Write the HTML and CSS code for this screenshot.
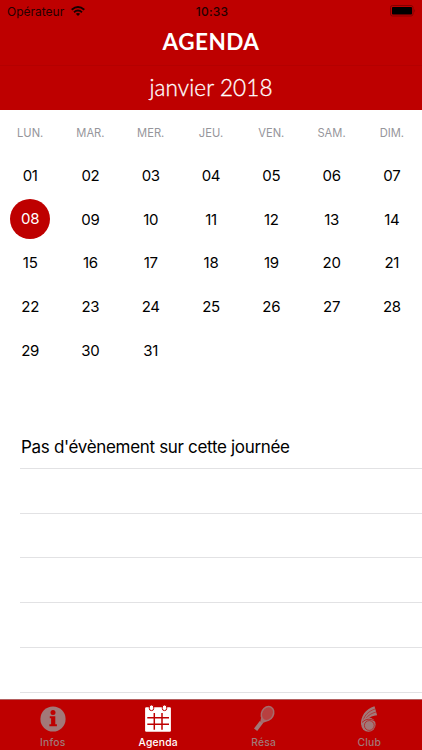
FILE: index.html
```
<!DOCTYPE html>
<html lang="fr">
<head>
    <meta charset="UTF-8">
    <meta name="viewport" content="width=device-width, initial-scale=1.0">
    <title>Agenda</title>
    <link rel="stylesheet" href="styles.css">
</head>
<body>

    <div class="app">
        <header>
            <div class="status-bar">
                <div class="carrier">
                    <span class="operator">Opérateur</span>
                    <svg class="wifi" width="14" height="10" viewBox="0 0 14 10" fill="none" stroke="#180000" stroke-width="1.9">
                        <path d="M0.7 3.7 Q7 -1.7 13.3 3.7"/>
                        <path d="M3 6.2 Q7 2.7 11 6.2"/>
                        <path d="M4.8 7.8 Q7 6.2 9.2 7.8 L7 10 Z" fill="#180000" stroke="none"/>
                    </svg>
                </div>
                <span class="time">10:33</span>
                <svg class="battery" width="27" height="12" viewBox="0 0 27 12">
                    <rect x="0.5" y="0.5" width="22.5" height="10.5" rx="2" fill="none" stroke="#830000"/>
                    <rect x="2" y="2" width="20" height="7.5" rx="0.8" fill="#000"/>
                    <path d="M24.3 3.8 Q26 5.7 24.3 7.7 Z" fill="#830000"/>
                </svg>
            </div>
            <h1>AGENDA</h1>
            <h2>janvier 2018</h2>
        </header>

        <div class="weekdays">
            <span>LUN.</span><span>MAR.</span><span>MER.</span><span>JEU.</span><span>VEN.</span><span>SAM.</span><span>DIM.</span>
        </div>
        <div class="days">
            <span>01</span><span>02</span><span>03</span><span>04</span><span>05</span><span>06</span><span>07</span>
            <span class="selected">08</span><span>09</span><span>10</span><span>11</span><span>12</span><span>13</span><span>14</span>
            <span>15</span><span>16</span><span>17</span><span>18</span><span>19</span><span>20</span><span>21</span>
            <span>22</span><span>23</span><span>24</span><span>25</span><span>26</span><span>27</span><span>28</span>
            <span>29</span><span>30</span><span>31</span>
        </div>

        <ul class="events">
            <li><span class="event-text">Pas d'évènement sur cette journée</span></li>
            <li></li>
            <li></li>
            <li></li>
            <li></li>
            <li></li>
        </ul>

        <nav>
            <a class="tab">
                <svg width="28" height="28" viewBox="0 0 28 28">
                    <circle cx="14" cy="14" r="12.6" fill="#a27878"/>
                    <circle cx="14" cy="7.6" r="2.5" fill="#be0000"/>
                    <path d="M10.8 11.2 H16.3 V19.2 H17.9 V21.2 H10.4 V19.2 H12.1 V13.2 H10.8 Z" fill="#be0000"/>
                </svg>
                <span>Infos</span>
            </a>
            <a class="tab active">
                <svg width="28" height="28" viewBox="0 0 28 28">
                    <rect x="1.1" y="2.2" width="25.8" height="24.5" rx="1.2" fill="#fff"/>
                    <g stroke="#be0000" fill="#fff">
                        <rect x="5.3" y="0" width="4.4" height="5.6" rx="2.1"/>
                        <rect x="18.3" y="0" width="4.4" height="5.6" rx="2.1"/>
                    </g>
                    <path d="M10.3 8 V24.7 M18 8 V24.7 M3.3 12.8 H25 M3.3 19.2 H25" stroke="#be0000" stroke-width="1.5"/>
                </svg>
                <span>Agenda</span>
            </a>
            <a class="tab">
                <svg width="28" height="28" viewBox="0 0 28 28">
                    <ellipse cx="17.5" cy="8.6" rx="5.9" ry="7.4" transform="rotate(28 17.5 8.6)" fill="#b84040" stroke="#a66c6c" stroke-width="1.5"/>
                    <path d="M11.4 11.5 Q12.2 15.7 17 16.2 L12.2 18.2 L10.3 16.5 Z" fill="#a66c6c"/>
                    <path d="M11.4 17.1 L5.6 24.8" stroke="#a27878" stroke-width="4"/>
                </svg>
                <span>Résa</span>
            </a>
            <a class="tab">
                <svg width="28" height="28" viewBox="0 0 28 28">
                    <!-- racket bands sweeping down into the ball -->
                    <path d="M6 20 C5.6 11.5 10 4.5 19.5 1.3 L22.1 10.2 C18 10.6 15 11.8 12 14.2 Z" fill="#a27878"/>
                    <path d="M8.3 15.5 C9.5 10 13.5 6.3 20 4 M9.8 15.8 C11.5 11.3 15.5 8.6 21 7" fill="none" stroke="#be0000" stroke-width="0.5"/>
                    <circle cx="13.4" cy="19.6" r="7.2" fill="#a27878"/>
                    <circle cx="14.3" cy="20.5" r="4.9" fill="none" stroke="#be0000" stroke-width="0.6"/>
                    <path d="M7 17.4 Q12.5 11.6 20.5 16.2" fill="none" stroke="#be0000" stroke-width="0.7"/>
                </svg>
                <span>Club</span>
            </a>
        </nav>
    </div>

</body>
</html>
```
FILE: styles.css
```
* {
    box-sizing: border-box;
}

body {
    margin: 0;
    font-family: Inter, sans-serif;
    background-color: #fff;
    color: #000;
}

.app {
    display: flex;
    flex-direction: column;
    height: 750px;
    overflow: hidden;
}

header {
    height: 110px;
    background-color: #be0000;
    color: #fff;
    text-align: center;
    font-family: Lato, sans-serif;
}

.status-bar {
    display: grid;
    grid-template-columns: 1fr auto 1fr;
    align-items: center;
    height: 22px;
    padding: 0 5px 0 7px;
    color: #250000;
    font-family: Inter, sans-serif;
    font-size: 12px;
}

.carrier {
    display: flex;
    align-items: center;
    gap: 7px;
}

.time {
    font-weight: 500;
    letter-spacing: 0.2px;
}

.battery {
    justify-self: end;
}

h1 {
    height: 44px;
    margin: 0;
    border-bottom: 1px solid #b40000;
    font-size: 22.5px;
    font-weight: bold;
    letter-spacing: 0.5px;
    line-height: 39px;
}

h2 {
    margin: 0;
    font-size: 22.5px;
    font-weight: 300;
    letter-spacing: 0.1px;
    line-height: 43px;
    -webkit-text-stroke: 0.3px #fff;
}

.weekdays, .days {
    display: grid;
    grid-template-columns: repeat(7, 1fr);
    justify-items: center;
    align-items: center;
}

.weekdays {
    height: 44px;
    padding-top: 1px;
    color: #96969b;
    font-size: 11.2px;
}

.days {
    grid-template-rows: repeat(5, 43.6px);
    height: 270px;
    font-size: 15px;
    letter-spacing: -0.3px;
}

.selected {
    width: 40px;
    height: 40px;
    border-radius: 50%;
    background-color: #be0000;
    color: #fff;
    line-height: 40px;
    text-align: center;
}

.events {
    flex: 1;
    margin: 0;
    padding: 0 0 0 20px;
    list-style: none;
}

.events li {
    display: flex;
    align-items: center;
    height: 44.8px;
    border-bottom: 1px solid #e2e2e4;
}

.event-text {
    padding: 2px 0 0 1px;
    font-size: 17px;
    letter-spacing: -0.32px;
}

nav {
    display: grid;
    grid-template-columns: repeat(4, 1fr);
    height: 51px;
    border-top: 1px solid #b46060;
    background-color: #be0000;
}

.tab {
    display: flex;
    flex-direction: column;
    align-items: center;
    padding-top: 5px;
    color: #a27878;
    font-size: 10.3px;
    font-weight: 500;
    line-height: 19px;
    letter-spacing: 0.2px;
}

.active {
    color: #fff;
}
```
